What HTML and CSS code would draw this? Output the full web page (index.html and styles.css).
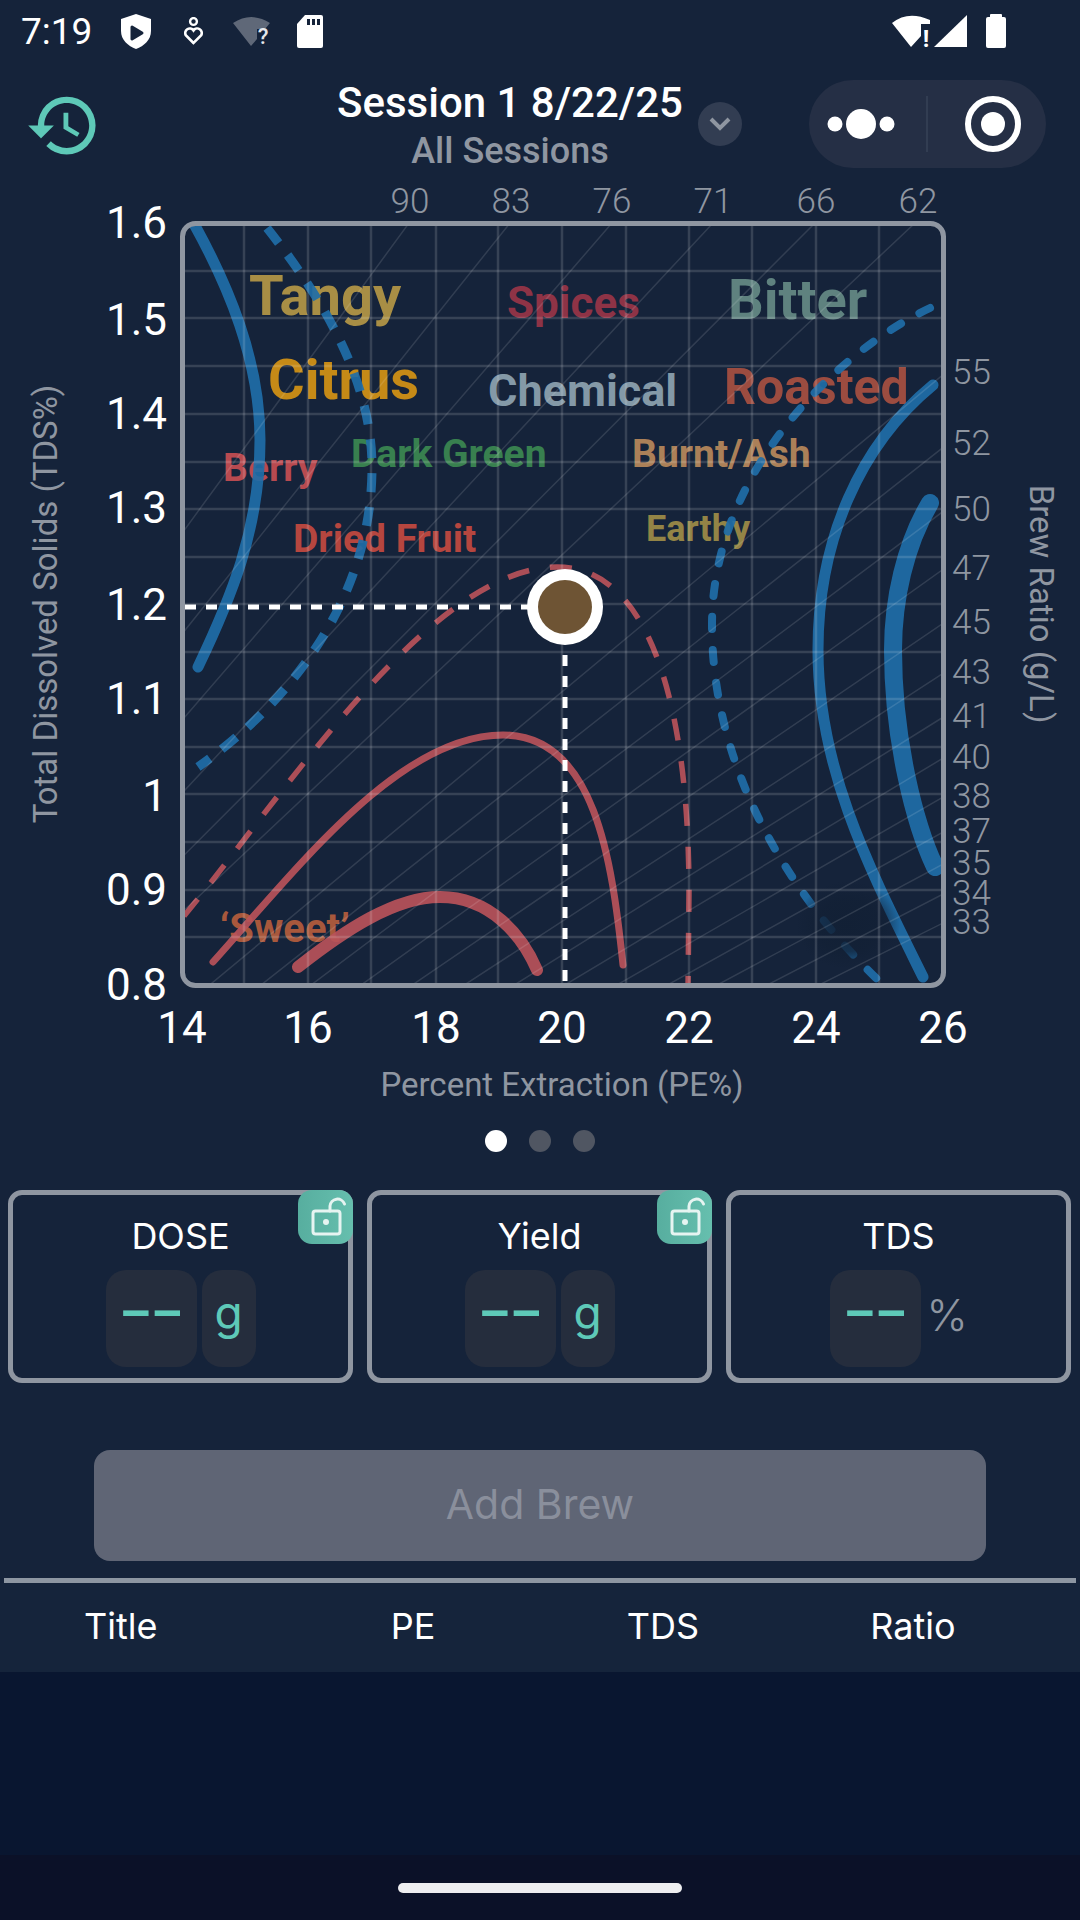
FILE: index.html
```html
<!DOCTYPE html>
<html lang="en">

<head>
    <meta charset="UTF-8">
    <meta name="viewport" content="width=device-width, initial-scale=1.0">
    <title>Brew Chart</title>
    <link rel="stylesheet" href="styles.css">
</head>

<body>
    <div class="phone">
        <div class="status-bar">
            <div class="status-left">
                <span class="time">7:19</span>
                <svg width="30" height="35" viewBox="0 0 30 35">
                    <path fill="#fff" d="M15 0 L30 5 V17 C30 26 23 32 15 35 C7 32 0 26 0 17 V5 Z" />
                    <path fill="#15233a" stroke="#15233a" stroke-width="3" stroke-linejoin="round" d="M11 13 L21 19 L11 25 Z" />
                </svg>
                <svg class="icon-heart" width="19" height="28" viewBox="0 0 19 28">
                    <circle cx="9.5" cy="4.5" r="3.4" fill="none" stroke="#fff" stroke-width="2.4" />
                    <path fill="none" stroke="#fff" stroke-width="2.6" d="M9.5 26 L2 18.5 A4.4 4.4 0 0 1 9.5 13.5 A4.4 4.4 0 0 1 17 18.5 Z" />
                </svg>
                <svg class="status-wifi" width="37" height="32" viewBox="0 0 37 32">
                    <path fill="#5f6878" d="M0 8 Q18 -4 37 8 L32 14 L24 14 L24 24 L18 31 Z" />
                    <text class="wifi-mark wifi-q" x="30" y="29">?</text>
                </svg>
                <svg class="icon-sd" width="26" height="33" viewBox="0 0 26 33">
                    <path fill="#fff" d="M8 0 H24 a2 2 0 0 1 2 2 V31 a2 2 0 0 1 -2 2 H2 a2 2 0 0 1 -2 -2 V9 Z" />
                    <path fill="#15233a" d="M10 4 h3 v6 h-3 z M15 4 h3 v6 h-3 z M20 4 h3 v6 h-3 z" />
                </svg>
            </div>
            <div class="status-right">
                <svg class="status-wifi" width="38" height="34" viewBox="0 0 38 34">
                    <path fill="#fff" d="M0 9 Q16 -4 38 6 V10 H29 V22 L19 33 Z" />
                    <text class="wifi-mark wifi-bang" x="34" y="33">!</text>
                </svg>
                <svg class="icon-signal" width="33" height="32" viewBox="0 0 33 32">
                    <path fill="#fff" d="M33 0 V32 H0 Z" />
                </svg>
                <svg class="icon-battery" width="20" height="34" viewBox="0 0 20 34">
                    <path fill="#fff" d="M4 3 V1 a1 1 0 0 1 1 -1 H15 a1 1 0 0 1 1 1 V3 H18 a2 2 0 0 1 2 2 V32 a2 2 0 0 1 -2 2 H2 a2 2 0 0 1 -2 -2 V5 a2 2 0 0 1 2 -2 Z" />
                </svg>
            </div>
        </div>

        <div class="app-bar">
            <svg class="history-icon" width="77" height="77" viewBox="0 0 24 24">
                <path fill="#5ec9b8" d="M13 3a9 9 0 0 0-9 9H1l3.89 3.89.07.14L9 12H6c0-3.87 3.13-7 7-7s7 3.13 7 7-3.13 7-7 7c-1.93 0-3.68-.79-4.94-2.06l-1.42 1.42A8.954 8.954 0 0 0 13 21a9 9 0 0 0 0-18zm-1 5v5l4.28 2.54.72-1.21-3.5-2.08V8H12z" />
            </svg>
            <div class="session">
                <div class="session-title">Session 1 8/22/25</div>
                <div class="session-sub">All Sessions</div>
            </div>
            <div class="chevron">
                <svg width="22" height="14" viewBox="0 0 22 14">
                    <path fill="none" stroke="#8f96a1" stroke-width="4" d="M2 2 L11 11 L20 2" />
                </svg>
            </div>
            <div class="capsule">
                <svg width="70" height="32" viewBox="0 0 70 32">
                    <circle cx="8" cy="16" r="7.5" fill="#fff" />
                    <circle cx="34" cy="16" r="15" fill="#fff" />
                    <circle cx="60" cy="16" r="7.5" fill="#fff" />
                </svg>
                <span class="capsule-line"></span>
                <svg width="58" height="58" viewBox="0 0 58 58">
                    <circle cx="29" cy="29" r="25" fill="none" stroke="#fff" stroke-width="6" />
                    <circle cx="29" cy="29" r="12" fill="#fff" />
                </svg>
            </div>
        </div>

        <svg class="chart" width="1080" height="942" viewBox="0 168 1080 942">
            <defs>
                <clipPath id="plot-clip">
                    <rect x="183" y="224" width="760" height="761" rx="12" />
                </clipPath>
                <radialGradient id="smudge">
                    <stop offset="0" stop-color="#122035" stop-opacity="0.95" />
                    <stop offset="0.6" stop-color="#122035" stop-opacity="0.75" />
                    <stop offset="1" stop-color="#122035" stop-opacity="0" />
                </radialGradient>
            </defs>

            <text class="axis-title" transform="translate(57 604) rotate(-90)">Total Dissolved Solids (TDS%)</text>
            <text class="axis-title" transform="translate(1030 604) rotate(90)">Brew Ratio (g/L)</text>
            <text class="axis-title" x="562" y="1096">Percent Extraction (PE%)</text>

            <g class="tick-y">
                <text x="167" y="238">1.6</text>
                <text x="167" y="335">1.5</text>
                <text x="167" y="429">1.4</text>
                <text x="167" y="523">1.3</text>
                <text x="167" y="620">1.2</text>
                <text x="167" y="714">1.1</text>
                <text x="167" y="811">1</text>
                <text x="167" y="905">0.9</text>
                <text x="167" y="1000">0.8</text>
            </g>
            <g class="tick-x">
                <text x="182" y="1043">14</text>
                <text x="308" y="1043">16</text>
                <text x="436" y="1043">18</text>
                <text x="562" y="1043">20</text>
                <text x="689" y="1043">22</text>
                <text x="816" y="1043">24</text>
                <text x="943" y="1043">26</text>
            </g>
            <g class="tick-top">
                <text x="410" y="213">90</text>
                <text x="511" y="213">83</text>
                <text x="612" y="213">76</text>
                <text x="713" y="213">71</text>
                <text x="816" y="213">66</text>
                <text x="918" y="213">62</text>
            </g>
            <g class="tick-right">
                <text x="952" y="384">55</text>
                <text x="952" y="455">52</text>
                <text x="952" y="521">50</text>
                <text x="952" y="580">47</text>
                <text x="952" y="634">45</text>
                <text x="952" y="684">43</text>
                <text x="952" y="728">41</text>
                <text x="952" y="769">40</text>
                <text x="952" y="808">38</text>
                <text x="952" y="843">37</text>
                <text x="952" y="875">35</text>
                <text x="952" y="905">34</text>
                <text x="952" y="934">33</text>
            </g>

            <g clip-path="url(#plot-clip)">
                <text class="flavor tangy" x="249" y="315">Tangy</text>
                <text class="flavor citrus" x="268" y="399">Citrus</text>
                <text class="flavor spices" x="507" y="318">Spices</text>
                <text class="flavor bitter" x="728" y="319">Bitter</text>
                <text class="flavor chemical" x="488" y="406">Chemical</text>
                <text class="flavor roasted" x="724" y="404">Roasted</text>
                <text class="flavor dark-green" x="351" y="467">Dark Green</text>
                <text class="flavor burnt" x="632" y="467">Burnt/Ash</text>
                <text class="flavor berry" x="223" y="481">Berry</text>
                <text class="flavor dried" x="293" y="552">Dried Fruit</text>
                <text class="flavor earthy" x="646" y="541">Earthy</text>
                <text class="flavor sweet" x="220" y="942">‘Sweet’</text>

                <g class="curves-blue">
                    <path class="solid w11" d="M193 222 C228 285 260 360 260 440 C260 530 230 600 198 667" />
                    <path class="dash-blue" d="M267 228 C322 297 372 380 372 467 C372 590 300 695 198 767" />
                    <path class="dash-blue-round" d="M930 308 C840 350 712 470 712 625 C712 770 790 895 878 980" />
                    <path class="solid w11" d="M933 385 C860 445 818 540 818 650 C818 770 870 870 923 977" />
                    <path class="solid w18" d="M930 503 C905 545 893 600 893 650 C893 740 915 825 935 867" />
                </g>
                <ellipse cx="848" cy="925" rx="52" ry="44" fill="url(#smudge)" />
                <g class="curves-red">
                    <path class="solid w7" d="M213 962 C300 865 400 735 503 735 C595 735 612 860 623 965" />
                    <path class="solid w12" d="M298 967 C345 930 395 897 440 897 C490 897 522 935 537 970" />
                    <path class="dash-red" d="M184 916 C280 800 430 567 557 567 C655 567 689 720 689 893 L688 990" />
                </g>

                <g class="grid">
                    <path d="M244 224V985M308 224V985M371 224V985M436 224V985M498 224V985M562 224V985M626 224V985M689 224V985M752 224V985M816 224V985M879 224V985" />
                    <path d="M183 271H943M183 318H943M183 366H943M183 414H943M183 462H943M183 509H943M183 557H943M183 604H943M183 652H943M183 699H943M183 747H943M183 794H943M183 842H943M183 890H943M183 937H943" />
                </g>
                <g class="ratio-lines">
                    <path d="M-706 1747L409 223M-706 1747L510 223M-706 1747L612 223M-706 1747L713 223M-706 1747L815 223M-706 1747L915 223" />
                    <path d="M-706 1747L945 373M-706 1747L945 446M-706 1747L945 510M-706 1747L945 568M-706 1747L945 622M-706 1747L945 672M-706 1747L945 716" />
                    <path d="M-706 1747L945 757M-706 1747L945 796M-706 1747L945 831M-706 1747L945 863M-706 1747L945 893M-706 1747L945 922" />
                </g>
            </g>

            <rect class="plot-frame" x="182.5" y="223.5" width="761" height="762" rx="13" />

            <path class="marker-line" d="M185 607H530" />
            <path class="marker-line" d="M565 655V985" />
            <circle cx="565" cy="607" r="38" fill="#fff" />
            <circle cx="565" cy="607" r="27" fill="#6e5434" />
        </svg>

        <div class="pager">
            <span class="pager-dot active"></span>
            <span class="pager-dot"></span>
            <span class="pager-dot"></span>
        </div>

        <div class="cards">
            <div class="card">
                <div class="card-label">DOSE</div>
                <div class="card-fields">
                    <div class="field field-value">––</div>
                    <div class="field field-unit">g</div>
                </div>
                <div class="lock">
                    <svg width="55" height="54" viewBox="0 0 55 54">
                        <rect x="15" y="21" width="27" height="23" rx="2.5" fill="none" stroke="#e6f4f1" stroke-width="3" />
                        <path fill="none" stroke="#e6f4f1" stroke-width="3" stroke-linecap="round" d="M32 21 V16 a7.5 7.5 0 0 1 14.5 -2" />
                        <circle cx="28" cy="32" r="3" fill="#e6f4f1" />
                    </svg>
                </div>
            </div>
            <div class="card">
                <div class="card-label">Yield</div>
                <div class="card-fields">
                    <div class="field field-value">––</div>
                    <div class="field field-unit">g</div>
                </div>
                <div class="lock">
                    <svg width="55" height="54" viewBox="0 0 55 54">
                        <rect x="15" y="21" width="27" height="23" rx="2.5" fill="none" stroke="#e6f4f1" stroke-width="3" />
                        <path fill="none" stroke="#e6f4f1" stroke-width="3" stroke-linecap="round" d="M32 21 V16 a7.5 7.5 0 0 1 14.5 -2" />
                        <circle cx="28" cy="32" r="3" fill="#e6f4f1" />
                    </svg>
                </div>
            </div>
            <div class="card">
                <div class="card-label">TDS</div>
                <div class="card-fields card-fields-tds">
                    <div class="field field-value">––</div>
                    <div class="field-suffix">%</div>
                </div>
            </div>
        </div>

        <button class="add-brew">Add Brew</button>

        <div class="table-rule"></div>
        <div class="table-head">
            <span class="col col-title">Title</span>
            <span class="col">PE</span>
            <span class="col">TDS</span>
            <span class="col">Ratio</span>
        </div>

        <div class="table-body"></div>

        <div class="nav-bar">
            <span class="nav-handle"></span>
        </div>
    </div>
</body>

</html>
```

FILE: styles.css
```css
* {
    margin: 0;
    padding: 0;
    box-sizing: border-box;
}

body {
    background-color: #15233a;
    font-family: Roboto, sans-serif;
}

.phone {
    width: 1080px;
    height: 1920px;
    display: flex;
    flex-direction: column;
    overflow: hidden;
    background-color: #15233a;
}

/* status bar */
.status-bar {
    height: 62px;
    flex-shrink: 0;
    display: flex;
    justify-content: space-between;
    align-items: center;
    padding: 0 74px 0 21px;
}

.status-left,
.status-right {
    display: flex;
    align-items: center;
}

.status-left {
    gap: 30px;
}

.time {
    width: 70px;
    color: #fff;
    font-size: 37px;
}

.status-wifi {
    overflow: visible;
}

.icon-heart {
    margin-left: 3px;
}

.icon-sd {
    margin-left: -3px;
}

.icon-signal {
    margin-left: 4px;
}

.icon-battery {
    margin-left: 19px;
}

.wifi-mark {
    font-family: Roboto, sans-serif;
    text-anchor: middle;
}

.wifi-q {
    fill: #e6e8ec;
    font-size: 22px;
    font-weight: 500;
}

.wifi-bang {
    fill: #fff;
    font-size: 24px;
    font-weight: 700;
}

/* app bar */
.app-bar {
    height: 88px;
    margin-top: 18px;
    flex-shrink: 0;
    display: flex;
    align-items: center;
    padding-left: 25px;
}

.history-icon {
    flex-shrink: 0;
    margin-top: 3px;
}

.session {
    width: 376px;
    height: 88px;
    margin-left: 220px;
    text-align: center;
    white-space: nowrap;
}

.session-title {
    color: #fff;
    font-size: 42px;
    font-weight: 500;
    line-height: 46px;
}

.session-sub {
    margin-top: 5px;
    color: #8f96a1;
    font-size: 36px;
    font-weight: 500;
    line-height: 40px;
}

.chevron {
    width: 44px;
    height: 44px;
    border-radius: 50%;
    background-color: #323d52;
    display: flex;
    justify-content: center;
    align-items: center;
}

.capsule {
    width: 237px;
    height: 88px;
    margin-left: 67px;
    border-radius: 44px;
    background-color: #252f45;
    display: flex;
    align-items: center;
    padding-left: 18px;
}

.capsule-line {
    width: 2px;
    height: 56px;
    margin: 0 36px 0 29px;
    background-color: #323d52;
}

/* chart */
.chart {
    display: block;
    flex-shrink: 0;
}

.axis-title {
    fill: #8f96a1;
    font-size: 33px;
    text-anchor: middle;
}

.tick-y text {
    fill: #fff;
    font-size: 44px;
    text-anchor: end;
}

.tick-x text {
    fill: #fff;
    font-size: 44px;
    text-anchor: middle;
}

.tick-top text {
    fill: #8f96a1;
    font-size: 35px;
    font-weight: 300;
    text-anchor: middle;
}

.tick-right text {
    fill: #8f96a1;
    font-size: 35px;
    font-weight: 300;
}

.plot-frame {
    fill: none;
    stroke: #8f96a1;
    stroke-width: 5;
}

.grid path {
    fill: none;
    stroke: rgba(255, 255, 255, 0.14);
    stroke-width: 2.5;
}

.ratio-lines path {
    fill: none;
    stroke: rgba(255, 255, 255, 0.12);
    stroke-width: 1.5;
}

.flavor {
    font-weight: 700;
}

.tangy { fill: #a88e45; font-size: 56px; }
.citrus { fill: #c58a17; font-size: 56px; }
.spices { fill: #8e3346; font-size: 44px; }
.bitter { fill: #5f827f; font-size: 56px; }
.chemical { fill: #8499a7; font-size: 45px; }
.roasted { fill: #9c4c40; font-size: 50px; }
.dark-green { fill: #38804f; font-size: 39px; }
.burnt { fill: #ab8058; font-size: 39px; }
.berry { fill: #b84a50; font-size: 39px; }
.dried { fill: #b6463f; font-size: 39px; }
.earthy { fill: #938446; font-size: 36px; }
.sweet { fill: #a8583c; font-size: 40px; }

.curves-blue path,
.curves-red path {
    fill: none;
    opacity: 0.92;
}

.curves-blue path {
    stroke: #1f6ea8;
}

.curves-red path {
    stroke: #b9535a;
}

.solid {
    stroke-linecap: round;
}

.w7 { stroke-width: 7; }
.w11 { stroke-width: 11; }
.w12 { stroke-width: 12; }
.w18 { stroke-width: 18; }

.dash-blue {
    stroke-width: 9;
    stroke-dasharray: 19 15;
}

.dash-blue-round {
    stroke-width: 8;
    stroke-linecap: round;
    stroke-dasharray: 12 21;
}

.dash-red {
    stroke-width: 5.5;
    stroke-dasharray: 22 21;
}

.marker-line {
    fill: none;
    stroke: #fff;
    stroke-width: 5;
    stroke-dasharray: 11 10;
}

/* pager */
.pager {
    height: 22px;
    margin-top: 20px;
    flex-shrink: 0;
    display: flex;
    justify-content: center;
    gap: 22px;
}

.pager-dot {
    width: 22px;
    height: 22px;
    border-radius: 50%;
    background-color: #505662;
}

.pager-dot.active {
    background-color: #fff;
}

/* cards */
.cards {
    margin-top: 38px;
    padding: 0 8px;
    flex-shrink: 0;
    display: flex;
    gap: 14px;
}

.card {
    position: relative;
    width: 345px;
    height: 193px;
    border: 5px solid #8f96a1;
    border-radius: 14px;
    font-family: Inter, sans-serif;
}

.card-label {
    height: 75px;
    padding-top: 19px;
    color: #fff;
    font-size: 36px;
    line-height: 44px;
    text-align: center;
}

.card-fields {
    display: flex;
    justify-content: center;
    gap: 5px;
}

.card-fields-tds {
    gap: 6px;
    padding-right: 6px;
}

.field {
    height: 97px;
    border-radius: 20px;
    background-color: #252d3d;
    color: #5ec9b8;
    display: flex;
    justify-content: center;
}

.field-value {
    width: 91px;
    font-family: Roboto, sans-serif;
    font-size: 50px;
    font-weight: 700;
    line-height: 88px;
}

.field-unit {
    width: 54px;
    font-size: 46px;
    line-height: 84px;
}

.field-suffix {
    width: 35px;
    color: #8f96a1;
    font-size: 44px;
    font-weight: 300;
    line-height: 90px;
}

.lock {
    position: absolute;
    top: -5px;
    right: -5px;
    width: 55px;
    height: 54px;
    border-radius: 14px;
    background: linear-gradient(90deg, #57ae9f, #66bfae);
}

.lock svg {
    display: block;
}

/* button + table */
.add-brew {
    width: 892px;
    height: 111px;
    margin: 67px 94px 0;
    flex-shrink: 0;
    border: none;
    border-radius: 16px;
    padding-bottom: 4px;
    background-color: #5f6575;
    color: #8a8f9c;
    font-family: Inter, sans-serif;
    font-size: 41px;
}

.table-rule {
    height: 5px;
    margin: 17px 4px 0;
    flex-shrink: 0;
    background-color: #8d96a2;
}

.table-head {
    height: 89px;
    flex-shrink: 0;
    background-color: #15243b;
    display: grid;
    grid-template-columns: 288px 250px 250px 250px;
    align-items: center;
    padding-bottom: 4px;
    color: #fff;
    font-family: Inter, sans-serif;
    font-size: 36px;
}

.col {
    text-align: center;
}

.col-title {
    padding-left: 84px;
    text-align: left;
}

.table-body {
    flex: 1;
    background-color: #091630;
}

.nav-bar {
    height: 65px;
    flex-shrink: 0;
    background-color: #0b1128;
    display: flex;
    justify-content: center;
    padding-top: 28px;
}

.nav-handle {
    width: 284px;
    height: 10px;
    border-radius: 5px;
    background-color: #eeeef0;
}
```
